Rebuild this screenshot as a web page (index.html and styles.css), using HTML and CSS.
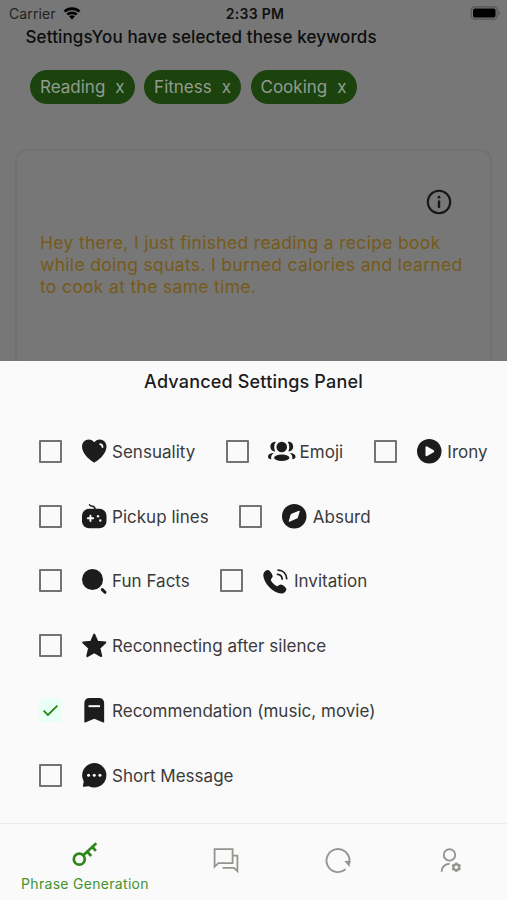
FILE: index.html
```html
<!DOCTYPE html>
<html lang="en">
<head>
    <meta charset="UTF-8">
    <meta name="viewport" content="width=device-width, initial-scale=1.0">
    <title>Phrase Generation</title>
    <link rel="stylesheet" href="styles.css">
</head>
<body>
    <div class="screen">
        <div class="page">
            <div class="status-bar">
                <div class="carrier">
                    <span>Carrier</span>
                    <svg class="wifi" viewBox="0 0 18 14">
                        <path d="M0.5 4.6a12.3 12.3 0 0 1 17 0l-1.9 2a9.6 9.6 0 0 0-13.2 0z"/>
                        <path d="M3.4 7.6a8.2 8.2 0 0 1 11.2 0l-1.9 2a5.4 5.4 0 0 0-7.4 0z"/>
                        <path d="M6.2 10.6a4.1 4.1 0 0 1 5.6 0L9 13.6z"/>
                    </svg>
                </div>
                <span class="time">2:33 PM</span>
                <svg class="battery" viewBox="0 0 31 14">
                    <rect x="1.2" y="0.8" width="26" height="12.4" rx="3.5" fill="none" stroke="#555" stroke-width="1.2"/>
                    <rect x="3" y="2.5" width="22.5" height="9" rx="1.8"/>
                    <path d="M28.5 4.7a2.5 2.5 0 0 1 0 4.6z" fill="#555"/>
                </svg>
            </div>
            <h1 class="keywords-title">SettingsYou have selected these keywords</h1>
            <div class="chips">
                <span class="chip"><span>Reading</span><span>x</span></span>
                <span class="chip"><span>Fitness</span><span>x</span></span>
                <span class="chip"><span>Cooking</span><span>x</span></span>
            </div>
            <div class="card">
                <svg class="info" viewBox="0 0 26 26">
                    <circle cx="13" cy="13" r="11.2" fill="none" stroke="#161616" stroke-width="2.1"/>
                    <path d="M11.8 11.5h2.4v7.4h-2.4z" fill="#161616"/>
                    <circle cx="13" cy="8.2" r="1.4" fill="#161616"/>
                </svg>
                <p class="phrase">Hey there, I just finished reading a recipe book<br>while doing squats. I burned calories and learned<br>to cook at the same time.</p>
            </div>
        </div>

        <div class="panel">
            <h2 class="panel-title">Advanced Settings Panel</h2>
            <div class="row">
                <div class="option">
                    <span class="box"></span>
                    <svg class="icon" viewBox="0 0 24 24">
                        <path d="M12 23.2C9.5 21.8 0 15.5 0 7.4 0 3.4 3 .4 6.6.4c2.2 0 4.2 1.1 5.4 2.8C13.2 1.500 15.2.4 17.4.4 21 .4 24 3.4 24 7.4c0 8.100-9.500 14.400-12 15.800z"/>
                        <path d="M17.800 5c1.500.3 2.300 1.400 2.300 2.900" fill="none" stroke="#fafafa" stroke-width="1.700" stroke-linecap="round"/>
                    </svg>
                    <span class="label">Sensuality</span>
                </div>
                <div class="option">
                    <span class="box"></span>
                    <svg class="icon icon-wide" viewBox="0 0 27 24">
                        <circle cx="13.500" cy="7.800" r="5.200"/>
                        <ellipse cx="13.500" cy="18.400" rx="7.500" ry="3.200"/>
                        <path d="M7.600 2.800C4.400 2.300 2.300 4.600 2.300 7.400s2 5 4.700 4.700C5.600 9 5.700 5.700 7.600 2.800zM19.400 2.800c3.200-.5 5.300 1.800 5.300 4.600s-2 5-4.700 4.700c1.400-3.100 1.300-6.400-.6-9.300z"/>
                        <path d="M5.600 13.800C2.400 13.900 0 15.300 0 17.300c0 1.400 1.100 2.300 3.200 2.500-.5-2.300.2-4.300 2.400-6zM21.400 13.800c3.200.1 5.600 1.500 5.600 3.500 0 1.400-1.100 2.300-3.200 2.500.5-2.300-.2-4.300-2.400-6z"/>
                    </svg>
                    <span class="label">Emoji</span>
                </div>
                <div class="option">
                    <span class="box"></span>
                    <svg class="icon" viewBox="0 0 24 24">
                        <circle cx="12" cy="12" r="12"/>
                        <path d="M9.400 8.200v7.600l6.400-3.800z" fill="#fafafa" stroke="#fafafa" stroke-width="2.200" stroke-linejoin="round"/>
                    </svg>
                    <span class="label">Irony</span>
                </div>
            </div>
            <div class="row">
                <div class="option">
                    <span class="box"></span>
                    <svg class="icon" viewBox="0 0 24 24">
                        <rect x="0" y="4.600" width="24" height="19.200" rx="7"/>
                        <path d="M7.400.8c.6 1.100 1.500 1.200 2.800 1.300 1.700.1 2.600 1 2.600 3.400" fill="none" stroke="#1c1c1c" stroke-width="1.500" stroke-linecap="round"/>
                        <path d="M8.300 11.400v5.200M5.700 14h5.200" stroke="#fafafa" stroke-width="1.900" stroke-linecap="round"/>
                        <circle cx="15.700" cy="12" r="1.150" fill="#fafafa"/>
                        <circle cx="17.900" cy="16.200" r="1.150" fill="#fafafa"/>
                    </svg>
                    <span class="label">Pickup lines</span>
                </div>
                <div class="option">
                    <span class="box"></span>
                    <svg class="icon" viewBox="0 0 24 24">
                        <circle cx="12" cy="12" r="12"/>
                        <path d="M16.800 7.200l-1.900 6.200-7.700 3.400L9.100 10.400z" fill="#fafafa" stroke="#fafafa" stroke-width="1.200" stroke-linejoin="round"/>
                    </svg>
                    <span class="label">Absurd</span>
                </div>
            </div>
            <div class="row">
                <div class="option">
                    <span class="box"></span>
                    <svg class="icon" viewBox="0 0 24 24">
                        <circle cx="10.300" cy="10.300" r="10.300"/>
                        <path d="M19.900 20.200l2.600 2.600" stroke="#1c1c1c" stroke-width="3" stroke-linecap="round"/>
                    </svg>
                    <span class="label">Fun Facts</span>
                </div>
                <div class="option">
                    <span class="box"></span>
                    <svg class="icon" viewBox="0 0 24 24">
                        <path d="M5.500 1.200C3.500.5.300 2.900.300 6.200c0 3 2 7.800 5.700 11.500 3.700 3.800 8.300 6.300 12 6.300 2.600 0 4.800-2.200 4.900-4.200.1-1.700-3.800-4.500-5.400-4.500-1.500 0-2.600 1.700-3.800 1.500-1.800-.4-5.600-4.200-6-6-.2-1.200 1.800-2.200 1.800-3.700C9.500 5.300 7 1.700 5.500 1.200z"/>
                        <path d="M14.200 5.300c2.600.2 4.400 2 4.600 4.600M14.800 1c4.800.2 8.100 3.600 8.400 8.500" fill="none" stroke="#1c1c1c" stroke-width="1.700" stroke-linecap="round"/>
                    </svg>
                    <span class="label">Invitation</span>
                </div>
            </div>
            <div class="row">
                <div class="option">
                    <span class="box"></span>
                    <svg class="icon" viewBox="0 0 24 24">
                        <path d="M12 1.600l3 6.900 7.800.8-5.800 5.300 1.800 8-6.800-3.800-6.800 3.800 1.800-8-5.800-5.300 7.800-.8z" stroke="#1c1c1c" stroke-width="2" stroke-linejoin="round"/>
                    </svg>
                    <span class="label">Reconnecting after silence</span>
                </div>
            </div>
            <div class="row">
                <div class="option">
                    <span class="box checked">
                        <svg viewBox="0 0 22 22"><path d="M3 11.200l5 4.900L19 5.400" fill="none" stroke="#2d8619" stroke-width="2.200"/></svg>
                    </span>
                    <svg class="icon" viewBox="0 0 24 24">
                        <path d="M2.300 23.500V5.500Q2.300.1 7.500.1h9q5.200 0 5.200 5.400v18q0 .8-.9.400L12 20.300 3.200 23.900q-.9.4-.9-.4z"/>
                        <path d="M6.400 8h11.200" stroke="#fafafa" stroke-width="1.900"/>
                    </svg>
                    <span class="label">Recommendation (music, movie)</span>
                </div>
            </div>
            <div class="row">
                <div class="option">
                    <span class="box"></span>
                    <svg class="icon" viewBox="0 0 24 24">
                        <path d="M12 0a12 12 0 1 1-5.300 22.800L2 23.300Q.6 23.500.9 22.200l.8-4.200A12 12 0 0 1 12 0z"/>
                        <g fill="#fafafa"><circle cx="6.400" cy="12" r="1.500"/><circle cx="12" cy="12" r="1.500"/><circle cx="17.600" cy="12" r="1.500"/></g>
                    </svg>
                    <span class="label">Short Message</span>
                </div>
            </div>
        </div>

        <div class="nav">
            <div class="tab active">
                <svg class="key" viewBox="0 0 26 24">
                    <g fill="none" stroke="#2f871c" stroke-width="2.700">
                        <circle cx="7.300" cy="16.700" r="5.500"/>
                        <path d="M11.300 12.700L24.300.8M15.200 9.200l4 4.300M20.300 4.500l3.600 3.900"/>
                    </g>
                </svg>
                <span>Phrase Generation</span>
            </div>
            <div class="tab">
                <svg class="tab-icon" viewBox="0 0 26 26">
                    <path d="M1.600 1.100h18v14H5.400l-3.800 3.600zM20.500 7.700h3.900v15.500l-3.600-3.400H9.500" fill="none" stroke="#92968f" stroke-width="1.800"/>
                </svg>
            </div>
            <div class="tab">
                <svg class="tab-icon" viewBox="0 0 26 26">
                    <path d="M20.500 21.300A11.500 11.500 0 1 1 24.500 12.500v3" fill="none" stroke="#92968f" stroke-width="1.900"/>
                    <path d="M19.300 13l5.900-.3-.6 6.200z" fill="#92968f"/>
                </svg>
            </div>
            <div class="tab">
                <svg class="tab-icon" viewBox="0 0 26 26">
                    <g fill="none" stroke="#92968f" stroke-width="1.900">
                        <circle cx="11.500" cy="6.900" r="5.700"/>
                        <path d="M3.600 23.700c0-4.500 3.400-8 8-8"/>
                        <circle cx="18.300" cy="19.300" r="2.900" stroke-width="2.300"/>
                        <path d="M18.300 14.500v2M18.300 22.100v2M14.100 16.900l1.800 1M20.700 20.700l1.800 1M14.100 21.700l1.800-1M20.700 17.900l1.800-1"/>
                    </g>
                </svg>
            </div>
        </div>
    </div>
</body>
</html>
```
FILE: styles.css
```css
body {
    margin: 0;
    font-family: Inter, "Liberation Sans", sans-serif;
    background-color: #fafafa;
    color: #1c1c1c;
}
h1, h2, p {
    margin: 0;
    font-weight: 500;
}
svg {
    overflow: visible;
}
.screen {
    display: flex;
    flex-direction: column;
    width: 507px;
    height: 900px;
    overflow: hidden;
}
.page {
    height: 361px;
    flex: none;
    overflow: hidden;
    background-color: #777;
}
.status-bar {
    display: grid;
    grid-template-columns: 1fr auto 1fr;
    align-items: center;
    height: 27px;
    padding: 0 6px 0 9px;
    font-size: 14px;
    color: #222;
}
.carrier {
    display: flex;
    align-items: center;
    gap: 7px;
    letter-spacing: 0.1px;
}
.wifi {
    width: 18px;
    height: 14px;
    margin-top: -2px;
    fill: #000;
}
.time {
    font-weight: 600;
    letter-spacing: 0.3px;
    color: #111;
}
.battery {
    width: 31px;
    height: 14px;
    margin-top: -1px;
    justify-self: end;
}
.keywords-title {
    padding-left: 25.5px;
    font-size: 17px;
    line-height: 20px;
    letter-spacing: 0.13px;
    color: #0d0d0d;
}
.chips {
    display: flex;
    gap: 9.5px;
    padding: 23px 30px 0;
}
.chip {
    display: flex;
    gap: 10px;
    height: 34px;
    padding: 0 10px;
    border-radius: 17px;
    background-color: #1c430e;
    color: #929c8e;
    font-size: 17px;
    line-height: 34px;
}
.card {
    display: flex;
    flex-direction: column;
    height: 260px;
    margin: 45px 15px 0 15px;
    padding: 38px 23px;
    box-sizing: border-box;
    border: 2px solid #72716d;
    border-radius: 12px;
}
.info {
    width: 26px;
    height: 26px;
    margin-right: 15px;
    align-self: flex-end;
}
.phrase {
    margin-top: 17px;
    font-size: 17.5px;
    font-weight: 400;
    line-height: 22px;
    letter-spacing: 0.32px;
    white-space: nowrap;
    color: #765a19;
}
.panel {
    height: 462px;
    flex: none;
}
.panel-title {
    height: 58px;
    padding-top: 10px;
    box-sizing: border-box;
    font-size: 18px;
    line-height: 22px;
    letter-spacing: 0.18px;
    text-align: center;
}
.row {
    display: flex;
    gap: 30.7px;
    height: 64.75px;
    padding-left: 38.5px;
}
.option {
    display: flex;
    align-items: center;
    font-size: 17px;
    letter-spacing: 0.02px;
    white-space: nowrap;
    color: #3a3a3a;
}
.label {
    padding-top: 1px;
}
.box {
    width: 23px;
    height: 23px;
    box-sizing: border-box;
    border: 2px solid #737373;
    border-radius: 1px;
}
.box.checked {
    padding: 2px;
    border: none;
    background-color: #e8fff5;
}
.box.checked svg {
    display: block;
}
.icon {
    width: 24.5px;
    height: 24.5px;
    margin: 0 6px 0 20px;
    fill: #1c1c1c;
}
.icon-wide {
    width: 27.5px;
    margin: 0 4.5px 0 18.5px;
}
.nav {
    display: grid;
    grid-template-columns: 170px 112px 112px 113px;
    height: 77px;
    box-sizing: border-box;
    border-top: 1px solid #ededed;
}
.tab {
    display: flex;
    flex-direction: column;
    align-items: center;
    padding-top: 24px;
}
.tab.active {
    padding-top: 18px;
    color: #43932f;
    font-size: 14px;
    line-height: 20px;
    letter-spacing: 0.3px;
}
.key {
    width: 26px;
    height: 25px;
    margin-bottom: 7px;
}
.tab-icon {
    width: 26px;
    height: 26px;
}
```
